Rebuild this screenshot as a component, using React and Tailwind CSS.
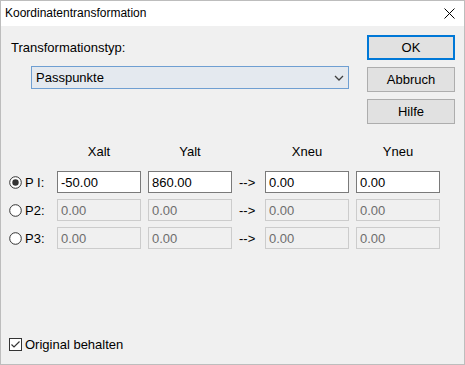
import React from "react";

const rows = [
  { label: "P I:", checked: true, enabled: true, values: ["-50.00", "860.00", "0.00", "0.00"] },
  { label: "P2:", checked: false, enabled: false, values: ["0.00", "0.00", "0.00", "0.00"] },
  { label: "P3:", checked: false, enabled: false, values: ["0.00", "0.00", "0.00", "0.00"] },
];

const Radio = ({ checked }) => (
  <svg width="13" height="13" viewBox="0 0 13 13">
    <circle cx="6.5" cy="6.5" r="5.8" fill="#ffffff" stroke="#333333" strokeWidth="1" />
    {checked && <circle cx="6.5" cy="6.5" r="3.2" fill="#333333" />}
  </svg>
);

const Field = ({ value, enabled }) => (
  <div
    className={`w-[84px] h-[22px] flex items-center pl-[3px] border ${
      enabled
        ? "bg-white border-[#7a7a7a] text-black"
        : "bg-[#f0f0f0] border-[#cccccc] text-[#6d6d6d]"
    }`}
  >
    {value}
  </div>
);

const Button = ({ children, primary }) => (
  <div
    className={`w-[88px] h-[25px] flex items-center justify-center bg-[#e1e1e1] ${
      primary ? "border-2 border-[#0078d7]" : "border border-[#adadad]"
    }`}
  >
    {children}
  </div>
);

export default function App() {
  return (
    <div className="w-[465px] h-[365px] border border-[#bdbdbd] bg-[#f0f0f0] flex flex-col text-black font-['Liberation_Sans',Arial,sans-serif] text-[13px] leading-[15px]">
      {/* Title bar */}
      <div className="h-[25px] bg-white flex items-center justify-between pl-[4px] pr-[9px] text-[12px]">
        <span>Koordinatentransformation</span>
        <svg width="11" height="11" viewBox="0 0 11 11">
          <path d="M0.5 0.5 L10.5 10.5 M10.5 0.5 L0.5 10.5" stroke="#000" strokeWidth="1" />
        </svg>
      </div>

      <div className="flex-1 flex flex-col">
        {/* Top section */}
        <div className="flex">
          <div className="flex-1 pl-[10px] pt-[14px]">
            <div>Transformationstyp:</div>
            <div className="mt-[11px] ml-[20px] w-[318px] h-[23px] border border-[#6f9fd2] bg-[#e4e9ef] flex items-center justify-between pl-[4px] pr-[4px]">
              <span>Passpunkte</span>
              <svg width="10" height="6" viewBox="0 0 10 6">
                <path d="M1 1 L5 5 L9 1" fill="none" stroke="#404040" strokeWidth="1.3" />
              </svg>
            </div>
          </div>
          <div className="flex flex-col gap-[7px] pt-[9px] pr-[9px]">
            <Button primary>OK</Button>
            <Button>Abbruch</Button>
            <Button>Hilfe</Button>
          </div>
        </div>

        {/* Headers */}
        <div className="flex mt-[20px] h-[15px]">
          <div className="w-[56px]" />
          <div className="w-[84px] text-center">Xalt</div>
          <div className="w-[7px]" />
          <div className="w-[84px] text-center">Yalt</div>
          <div className="w-[33px]" />
          <div className="w-[84px] text-center">Xneu</div>
          <div className="w-[7px]" />
          <div className="w-[84px] text-center">Yneu</div>
        </div>

        {/* Point rows */}
        <div className="flex flex-col gap-[6px] mt-[12px]">
          {rows.map((r) => (
            <div key={r.label} className="flex items-center h-[22px]">
              <div className="w-[56px] flex items-center pl-[8px] gap-[3px]">
                <Radio checked={r.checked} />
                <span>{r.label}</span>
              </div>
              <Field value={r.values[0]} enabled={r.enabled} />
              <div className="w-[7px]" />
              <Field value={r.values[1]} enabled={r.enabled} />
              <div className="w-[33px] pl-[7px]">--&gt;</div>
              <Field value={r.values[2]} enabled={r.enabled} />
              <div className="w-[7px]" />
              <Field value={r.values[3]} enabled={r.enabled} />
            </div>
          ))}
        </div>

        {/* Footer checkbox */}
        <div className="mt-auto mb-[12px] h-[15px] flex items-center pl-[8px] gap-[3px]">
          <svg width="13" height="13" viewBox="0 0 13 13">
            <rect x="0.5" y="0.5" width="12" height="12" fill="#ffffff" stroke="#333333" />
            <path d="M2.5 6.5 L5 9 L10.5 3.5" fill="none" stroke="#333333" strokeWidth="1.2" />
          </svg>
          <span>Original behalten</span>
        </div>
      </div>
    </div>
  );
}
